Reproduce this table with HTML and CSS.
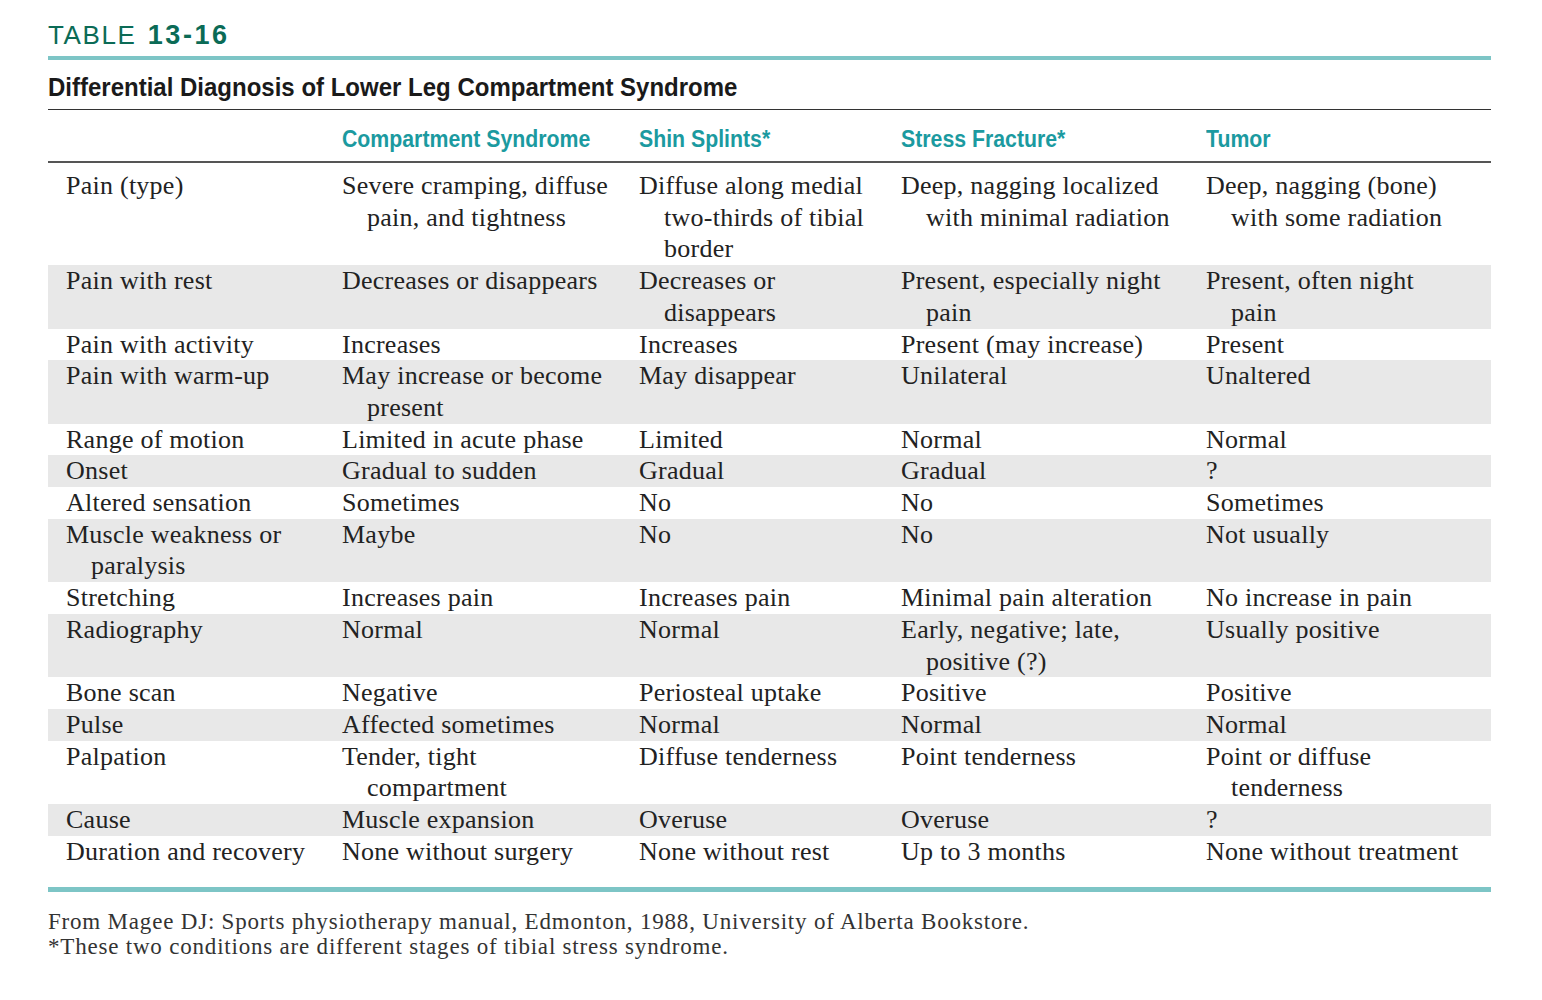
FILE: index.html
```html
<!DOCTYPE html>
<html>
<head>
<meta charset="utf-8">
<link rel="stylesheet" href="styles.css">
</head>
<body>
<div class="page">
  <div class="label"><span class="lbl-word">TABLE</span> <b>13-16</b></div>
  <div class="teal-rule"></div>
  <h1 class="title"><span class="cond">Differential Diagnosis of Lower Leg Compartment Syndrome</span></h1>
  <table class="dd">
    <colgroup>
      <col class="c1"><col class="c2"><col class="c3"><col class="c4"><col class="c5">
    </colgroup>
    <thead>
      <tr><th></th><th><span class="cond">Compartment Syndrome</span></th><th><span class="cond">Shin Splints*</span></th><th><span class="cond">Stress Fracture*</span></th><th><span class="cond">Tumor</span></th></tr>
    </thead>
    <tbody>
      <tr class="first"><td>Pain (type)</td><td>Severe cramping, diffuse<br>pain, and tightness</td><td>Diffuse along medial<br>two-thirds of tibial<br>border</td><td>Deep, nagging localized<br>with minimal radiation</td><td>Deep, nagging (bone)<br>with some radiation</td></tr>
      <tr class="alt"><td>Pain with rest</td><td>Decreases or disappears</td><td>Decreases or<br>disappears</td><td>Present, especially night<br>pain</td><td>Present, often night<br>pain</td></tr>
      <tr><td>Pain with activity</td><td>Increases</td><td>Increases</td><td>Present (may increase)</td><td>Present</td></tr>
      <tr class="alt"><td>Pain with warm-up</td><td>May increase or become<br>present</td><td>May disappear</td><td>Unilateral</td><td>Unaltered</td></tr>
      <tr><td>Range of motion</td><td>Limited in acute phase</td><td>Limited</td><td>Normal</td><td>Normal</td></tr>
      <tr class="alt"><td>Onset</td><td>Gradual to sudden</td><td>Gradual</td><td>Gradual</td><td>?</td></tr>
      <tr><td>Altered sensation</td><td>Sometimes</td><td>No</td><td>No</td><td>Sometimes</td></tr>
      <tr class="alt"><td>Muscle weakness or<br>paralysis</td><td>Maybe</td><td>No</td><td>No</td><td>Not usually</td></tr>
      <tr><td>Stretching</td><td>Increases pain</td><td>Increases pain</td><td>Minimal pain alteration</td><td>No increase in pain</td></tr>
      <tr class="alt"><td>Radiography</td><td>Normal</td><td>Normal</td><td>Early, negative; late,<br>positive (?)</td><td>Usually positive</td></tr>
      <tr><td>Bone scan</td><td>Negative</td><td>Periosteal uptake</td><td>Positive</td><td>Positive</td></tr>
      <tr class="alt"><td>Pulse</td><td>Affected sometimes</td><td>Normal</td><td>Normal</td><td>Normal</td></tr>
      <tr><td>Palpation</td><td>Tender, tight<br>compartment</td><td>Diffuse tenderness</td><td>Point tenderness</td><td>Point or diffuse<br>tenderness</td></tr>
      <tr class="alt"><td>Cause</td><td>Muscle expansion</td><td>Overuse</td><td>Overuse</td><td>?</td></tr>
      <tr><td>Duration and recovery</td><td>None without surgery</td><td>None without rest</td><td>Up to 3 months</td><td>None without treatment</td></tr>
    </tbody>
  </table>
  <div class="teal-rule thick"></div>
  <div class="notes">
    <p>From Magee DJ: Sports physiotherapy manual, Edmonton, 1988, University of Alberta Bookstore.</p>
    <p>*These two conditions are different stages of tibial stress syndrome.</p>
  </div>
</div>
</body>
</html>
```
FILE: styles.css
```css
html, body {
  margin: 0;
  padding: 0;
  background: #ffffff;
}

.page {
  width: 1443px;
  margin-left: 48px;
}

.label {
  padding-top: 19px;
  font-family: "Liberation Sans", Arial, sans-serif;
  font-size: 26px;
  line-height: 32px;
  color: #0b6b56;
  word-spacing: 4px;
}

.lbl-word {
  letter-spacing: 1.6px;
}

.label b {
  font-weight: 700;
  font-size: 27px;
  letter-spacing: 2.6px;
}

.teal-rule {
  margin-top: 5px;
  height: 4px;
  background: #7dc5c6;
}

.teal-rule.thick {
  margin-top: 20px;
  height: 5px;
}

.cond {
  display: inline-block;
  white-space: nowrap;
  transform-origin: left center;
}

.title {
  margin: 0;
  padding-top: 4px;
  height: 45px;
  line-height: 46px;
  font-family: "Liberation Sans", Arial, sans-serif;
  font-weight: 700;
  font-size: 25px;
  color: #1a1a1a;
  border-bottom: 1px solid #333333;
}

.title .cond {
  transform: scaleX(0.96);
}

.dd {
  width: 100%;
  border-collapse: collapse;
  table-layout: fixed;
  font-family: "Liberation Serif", "Times New Roman", serif;
  font-size: 26px;
  line-height: 31.7px;
  letter-spacing: 0.25px;
  color: #222222;
}

.c1 { width: 276px; }
.c2 { width: 297px; }
.c3 { width: 262px; }
.c4 { width: 305px; }
.c5 { width: 303px; }

.dd th {
  height: 43px;
  padding: 8px 18px 0;
  text-align: left;
  vertical-align: middle;
  font-family: "Liberation Sans", Arial, sans-serif;
  font-weight: 700;
  font-size: 23px;
  letter-spacing: 0;
  color: #1b9aa0;
  border-bottom: 2px solid #555555;
}

.dd th .cond {
  transform: scaleX(0.925);
}

.dd td {
  padding: 0 4px 0 43px;
  text-indent: -25px;
  vertical-align: top;
  white-space: nowrap;
}

.dd tr.first td {
  padding-top: 7px;
}

.dd tr.alt td {
  background: #e8e8e8;
}

.notes {
  margin-top: 17px;
  font-family: "Liberation Serif", "Times New Roman", serif;
  font-size: 23px;
  line-height: 25px;
  letter-spacing: 0.8px;
  color: #333333;
}

.notes p {
  margin: 0;
}
```
